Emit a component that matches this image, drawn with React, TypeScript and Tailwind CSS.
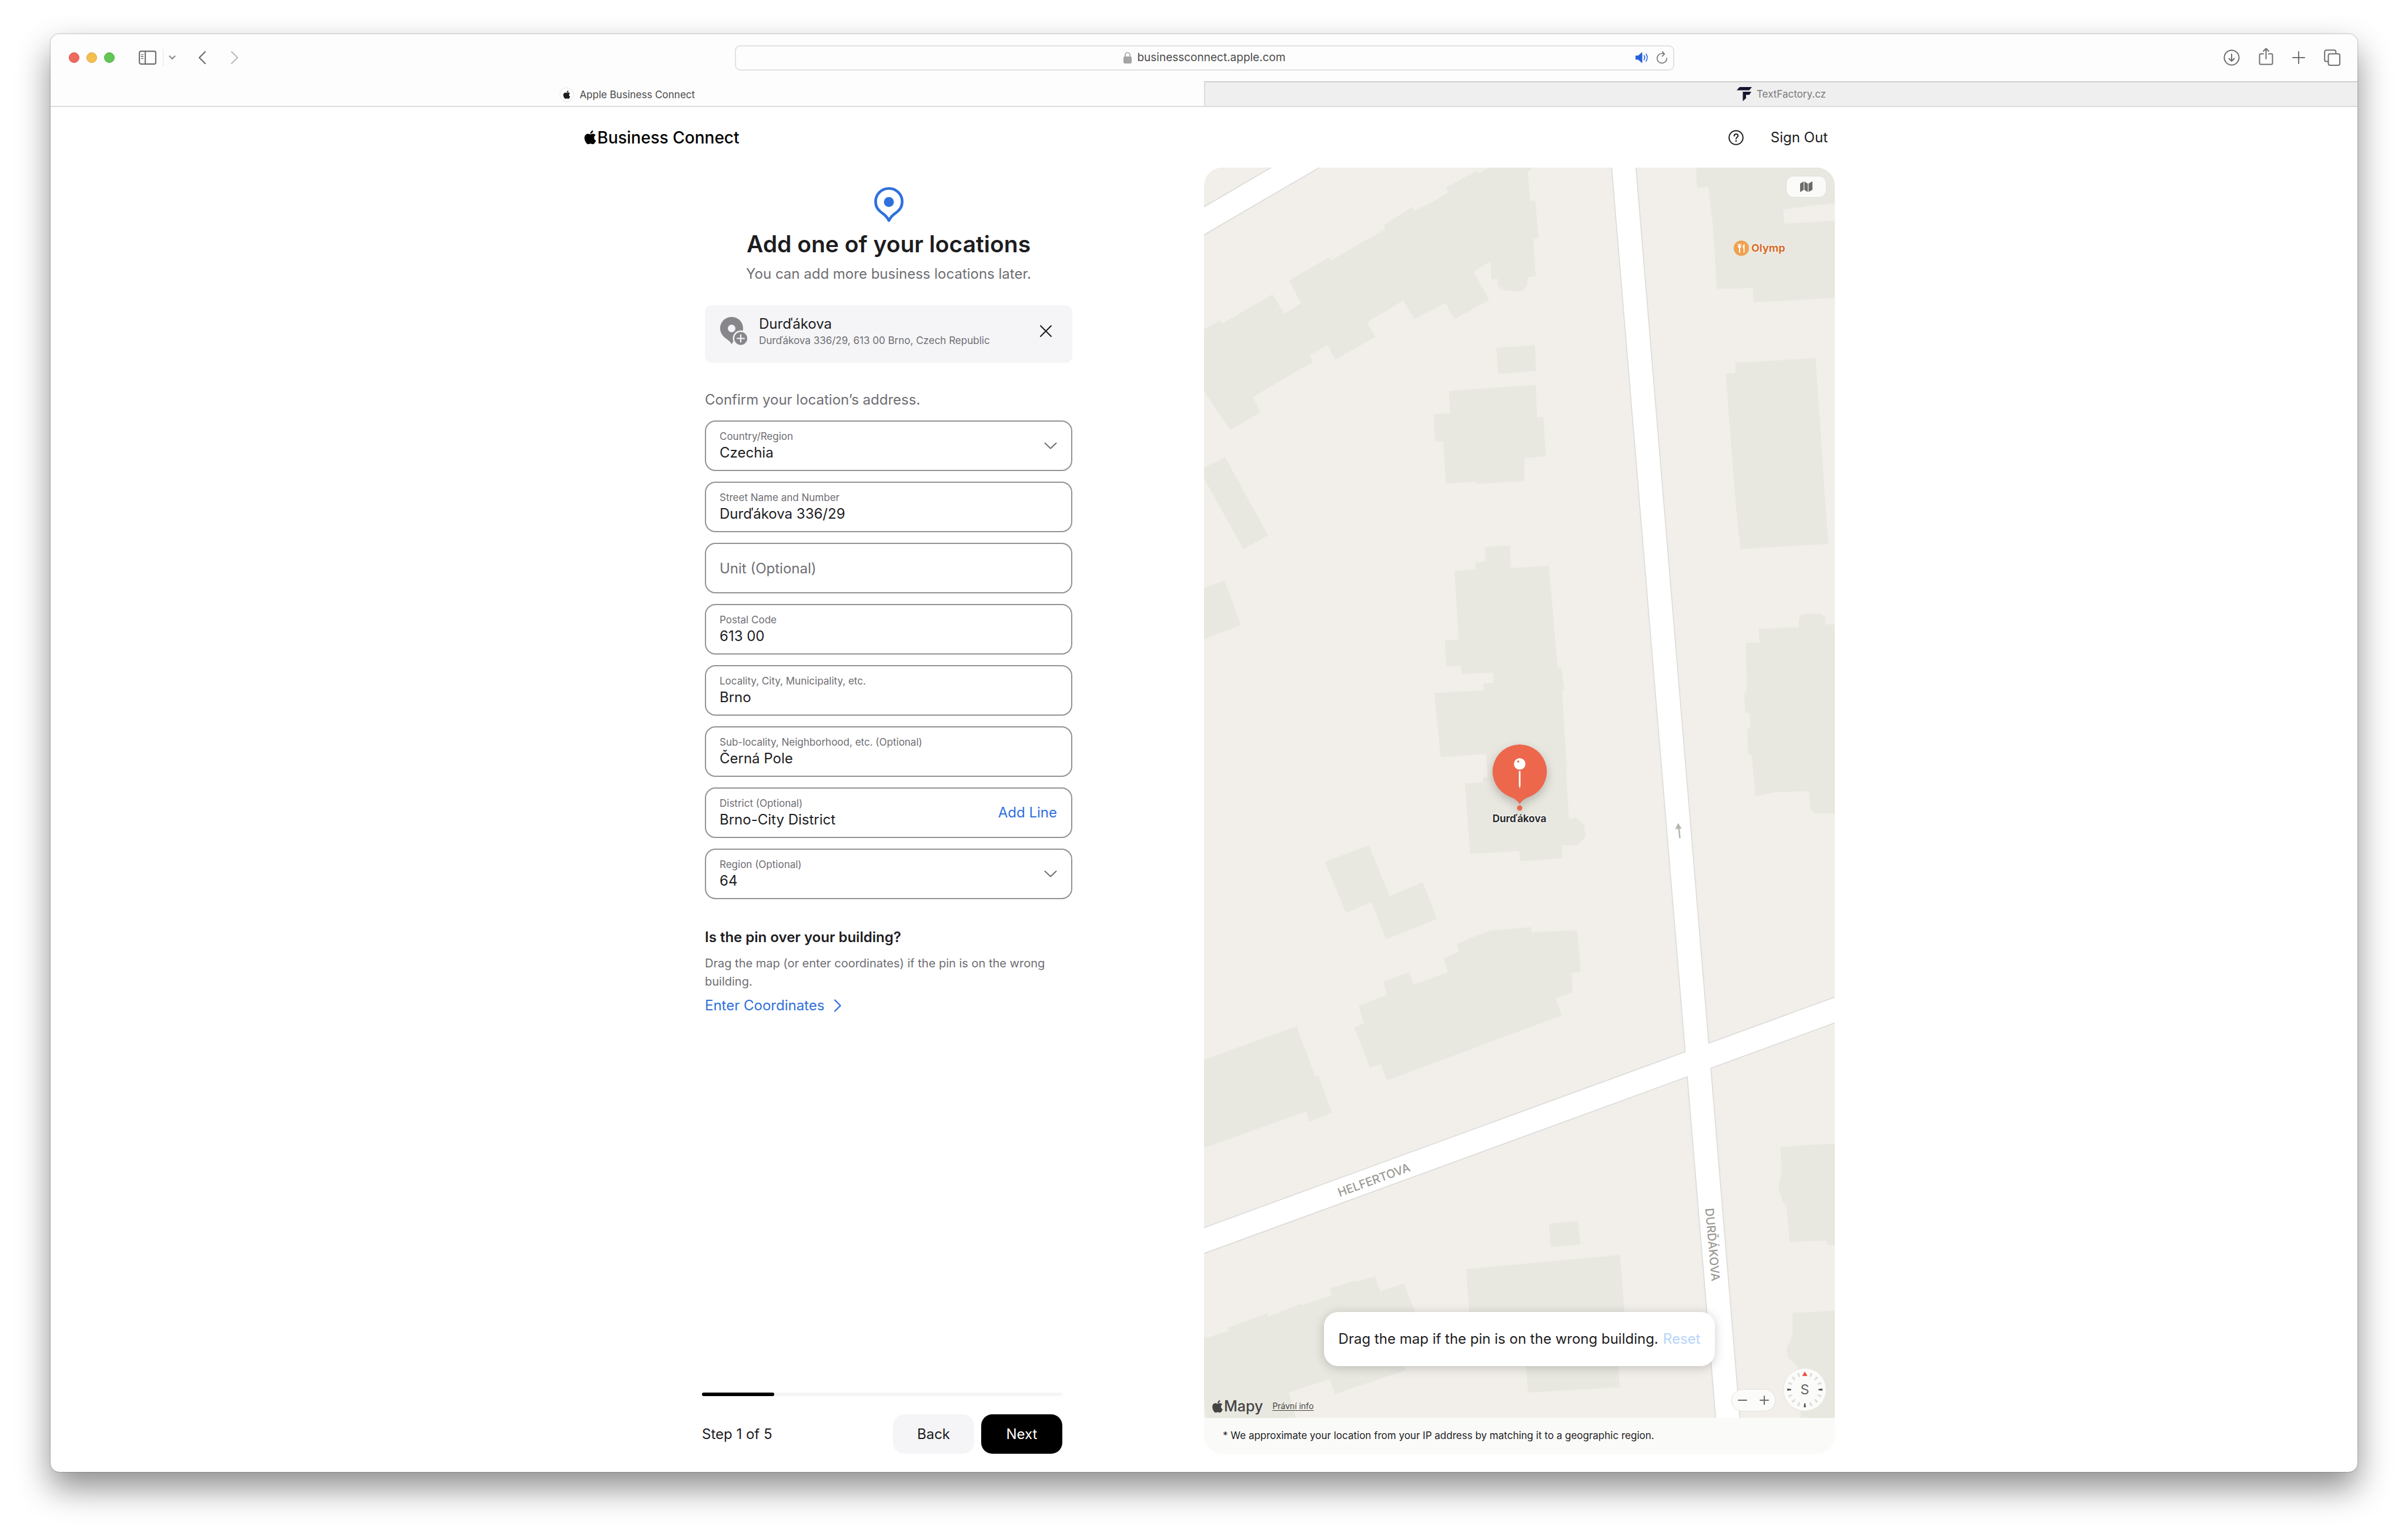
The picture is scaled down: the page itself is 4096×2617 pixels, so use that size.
import { useState, type ReactNode } from 'react';
import { FaApple } from 'react-icons/fa';

const TICKS = [22.5, 45, 67.5, 112.5, 135, 157.5, 202.5, 225, 247.5, 292.5, 315, 337.5];

function ChevronDown() {
  return (
    <svg viewBox="0 0 22 12" className="pointer-events-none h-3 w-[22px] shrink-0" fill="none" stroke="#6e6e73" strokeWidth="2" strokeLinecap="round" strokeLinejoin="round">
      <path d="M1.5 1.5 11 10.5 20.5 1.5" />
    </svg>
  );
}

function Toolbar() {
  return (
    <header className="flex h-20 items-center bg-[#fdfdfd] text-[#6f6f6f]">
      <div className="flex flex-1 items-center pl-[31px]">
        <div className="flex gap-3">
          <button aria-label="Close window" className="size-[18px] rounded-full border border-[#d9594f] bg-[#ed6a5f]" />
          <button aria-label="Minimize window" className="size-[18px] rounded-full border border-[#dfa63e] bg-[#f5bf4f]" />
          <button aria-label="Zoom window" className="size-[18px] rounded-full border border-[#51b143] bg-[#62c554]" />
        </div>
        <button aria-label="Sidebar" className="ml-[41px]">
          <svg viewBox="0 0 39 31" className="h-6 w-[30px]" fill="none" stroke="currentColor" strokeWidth="2.8">
            <rect x="1.4" y="1.4" width="36.2" height="28.2" rx="3.5" />
            <path d="M14.4 1.4v28.2" />
            <path d="M5.5 8.8h4.4M5.5 13.2h4.4M5.5 17.6h4.4" strokeWidth="1.8" strokeLinecap="round" />
          </svg>
        </button>
        <span className="ml-[11px] h-7 w-px bg-[#e4e4e4]" />
        <button aria-label="Tab groups" className="ml-[9px]">
          <svg viewBox="0 0 12 8" className="h-2 w-3" fill="none" stroke="#8b8b8f" strokeWidth="2.2" strokeLinecap="round" strokeLinejoin="round">
            <path d="M1.5 1.5 6 6l4.500-4.500" />
          </svg>
        </button>
        <button aria-label="Back" className="ml-[38px]">
          <svg viewBox="0 0 14 24" className="h-6 w-3.5" fill="none" stroke="currentColor" strokeWidth="2.3" strokeLinecap="round" strokeLinejoin="round">
            <path d="M12 2 2 12l10 10" />
          </svg>
        </button>
        <button aria-label="Forward" className="ml-[41px] text-[#bdbdbd]">
          <svg viewBox="0 0 14 24" className="h-6 w-3.5" fill="none" stroke="currentColor" strokeWidth="2.3" strokeLinecap="round" strokeLinejoin="round">
            <path d="m2 2 10 10L2 22" />
          </svg>
        </button>
      </div>
      <div className="relative flex h-[43px] w-[40.7%] items-center justify-center gap-[9px] rounded-[9px] border-2 border-[#e2e2e2]">
        <svg viewBox="0 0 14 20" className="h-5 w-3.5" fill="#a5a5a5">
          <rect x="0" y="8" width="14" height="12" rx="2.200" />
          <path d="M3 9V5.500a4 4 0 0 1 8 0V9" fill="none" stroke="#a5a5a5" strokeWidth="1.700" />
        </svg>
        <input aria-label="Address" defaultValue="businessconnect.apple.com" className="field-sizing-content bg-transparent text-[19px] leading-[26px] text-[#4b4b4b] outline-none" />
        <div className="absolute right-[9px] flex items-center gap-3">
          <button aria-label="Mute tab">
            <svg viewBox="0 0 24 20" className="h-5 w-6" fill="#2762dd">
              <path d="M1 6.500h4.500L11.500 1.200c.5-.4 1-.2 1 .4v16.800c0 .6-.5.8-1 .4L5.500 13.500H2c-.6 0-1-.4-1-1z" />
              <path d="M15.500 6.500c1.400 2 1.400 5 0 7M19 4c2.500 3.500 2.500 8.500 0 12" fill="none" stroke="#2762dd" strokeWidth="1.700" strokeLinecap="round" />
            </svg>
          </button>
          <button aria-label="Reload">
            <svg viewBox="0 0 20 22" className="h-[22px] w-5" fill="none" stroke="#777" strokeWidth="1.700" strokeLinecap="round" strokeLinejoin="round">
              <path d="M18.200 12.200a8.200 8.200 0 1 1-8.200-8.200c1.400 0 2.800.3 4 1M10.800.9 14.300 5 10.500 8.600" />
            </svg>
          </button>
        </div>
      </div>
      <div className="flex flex-1 items-center justify-end gap-8 pr-[29px]">
        <button aria-label="Downloads">
          <svg viewBox="0 0 28 28" className="size-7" fill="none" stroke="currentColor" strokeWidth="2" strokeLinecap="round" strokeLinejoin="round">
            <circle cx="14" cy="14" r="12.500" />
            <path d="M14 8v12M9.500 15.500 14 20l4.500-4.500" />
          </svg>
        </button>
        <button aria-label="Share" className="pb-1">
          <svg viewBox="0 0 25 30" className="h-[30px] w-[25px]" fill="none" stroke="currentColor" strokeWidth="2" strokeLinecap="round" strokeLinejoin="round">
            <path d="M8 10.500H3.500a2 2 0 0 0-2 2V26.500a2 2 0 0 0 2 2h18a2 2 0 0 0 2-2V12.500a2 2 0 0 0-2-2H17M12.500 19V1.500M8 6l4.500-4.500L17 6" />
          </svg>
        </button>
        <button aria-label="New tab">
          <svg viewBox="0 0 22 22" className="size-[22px]" fill="none" stroke="currentColor" strokeWidth="2" strokeLinecap="round">
            <path d="M11 1v20M1 11h20" />
          </svg>
        </button>
        <button aria-label="Tab overview">
          <svg viewBox="0 0 28 28" className="size-7" fill="none" stroke="currentColor" strokeWidth="2" strokeLinejoin="round">
            <rect x="7.500" y="7.500" width="19.500" height="19.500" rx="3" />
            <path d="M7.500 20.500H4a2.800 2.800 0 0 1-2.800-2.800V4A2.800 2.800 0 0 1 4 1.200h13.500A2.800 2.800 0 0 1 20.300 4v3.500" />
          </svg>
        </button>
      </div>
    </header>
  );
}

function TabBar() {
  return (
    <nav className="grid h-11 grid-cols-2 border-b-2 border-[#dcdcdc] text-[17px] leading-5">
      <a href="#connect" className="flex items-center justify-center gap-2.5 bg-[#fdfdfd] pt-1 text-[#4a4a4a]">
        <span className="flex size-6 items-center justify-center rounded-full border border-[#e4e4e4] bg-white text-[#1d1d1f]">
          <FaApple className="size-4" />
        </span>
        Apple Business Connect
      </a>
      <a href="#textfactory" className="flex items-center justify-center gap-2 border-t-2 border-l-2 border-t-[#cfcfcf] border-l-[#dcdcdc] bg-[#efefef] text-[#7a7a7a]">
        <svg viewBox="0 0 26 24" className="h-6 w-[26px]" fill="#171430">
          <path d="M5 0h21l-4.500 5.500H0zM10.500 8H25l-3.500 5.200h-5.500V19l-5.500 5z" />
        </svg>
        TextFactory.cz
      </a>
    </nav>
  );
}

type FieldProps = { id: string; label: string; value: string; select?: boolean; action?: ReactNode };

function Field({ id, label, value, select, action }: FieldProps) {
  const [text, setText] = useState(value);
  return (
    <div className="flex h-[86px] items-center justify-between rounded-[18px] border-2 border-[#929296] bg-white pr-6 pl-[23px]">
      <div className="flex flex-1 flex-col">
        <label htmlFor={id} className="text-[17px] leading-6 text-[#6e6e73]">
          {label}
        </label>
        {select ? (
          <select id={id} defaultValue={value} className="h-8 w-full appearance-none bg-transparent text-[24px] leading-8 outline-none">
            <option>{value}</option>
          </select>
        ) : (
          <input id={id} value={text} onChange={(e) => setText(e.target.value)} className="h-8 w-full bg-transparent text-[24px] leading-8 outline-none" />
        )}
      </div>
      {select ? <ChevronDown /> : action}
    </div>
  );
}

function LocationForm() {
  return (
    <section className="flex flex-col">
      <div className="mx-auto flex w-[625px] flex-col pt-[33px]">
        <svg viewBox="0 0 50 60" className="mx-auto h-[60px] w-[50px]" fill="none">
          <path d="M25 2.500C12.500 2.500 2.400 12.300 2.400 25c0 7.500 3.200 13 8.600 17.200 5.500 4.300 10.200 6.600 14 14.800 3.800-8.200 8.500-10.500 14-14.800 5.400-4.200 8.600-9.700 8.600-17.200C47.600 12.300 37.500 2.500 25 2.500z" stroke="#2f70dc" strokeWidth="4.600" strokeLinejoin="round" />
          <circle cx="25" cy="25.500" r="8.500" fill="#2f70dc" />
        </svg>
        <h1 className="mt-3 text-center text-[39px] leading-[50px] font-semibold">Add one of your locations</h1>
        <p className="mt-[9px] text-center text-[24px] leading-[34px] text-[#6e6e73]">You can add more business locations later.</p>

        <div className="mt-9 flex items-center rounded-xl bg-[#f5f5f7] pt-4 pr-[33px] pb-[26px] pl-[26px]">
          <svg viewBox="0 0 46 48" className="h-12 w-[46px]" fill="#86868b">
            <path d="M19.500 0C8.700 0 0 8.500 0 19.300c0 8 4.500 13.500 10 17.500 4.500 3.300 7.700 5.200 9.500 9.600 1.800-4.400 5-6.300 9.500-9.600 5.500-4 10-9.500 10-17.500C39 8.500 30.300 0 19.500 0z" />
            <circle cx="19.500" cy="19.500" r="6.500" fill="#f5f5f7" />
            <circle cx="35" cy="36.500" r="13.500" fill="#f5f5f7" />
            <circle cx="35" cy="36.500" r="11" />
            <path d="M35 30.500v12M29 36.500h12" stroke="#f5f5f7" strokeWidth="2.200" strokeLinecap="round" />
          </svg>
          <div className="ml-5 flex flex-1 flex-col">
            <span className="text-[24px] leading-8">Durďákova</span>
            <span className="text-[17px] leading-6 text-[#6e6e73]">Durďákova 336/29, 613 00 Brno, Czech Republic</span>
          </div>
          <button aria-label="Clear location">
            <svg viewBox="0 0 24 24" className="size-6" fill="none" stroke="#1d1d1f" strokeWidth="2" strokeLinecap="round">
              <path d="m3 3 18 18M21 3 3 21" />
            </svg>
          </button>
        </div>

        <p className="mt-[46px] text-[24px] leading-[34px] text-[#6e6e73]">Confirm your location’s address.</p>
        <form className="mt-[18px] flex flex-col gap-[18px]">
          <Field id="country" label="Country/Region" value="Czechia" select />
          <Field id="street" label="Street Name and Number" value="Durďákova 336/29" />
          <input aria-label="Unit (Optional)" placeholder="Unit (Optional)" className="h-[86px] rounded-[18px] border-2 border-[#929296] px-[23px] text-[24px] outline-none placeholder:text-[#6e6e73]" />
          <Field id="postal" label="Postal Code" value="613 00" />
          <Field id="locality" label="Locality, City, Municipality, etc." value="Brno" />
          <Field id="sublocality" label="Sub-locality, Neighborhood, etc. (Optional)" value="Černá Pole" />
          <Field
            id="district"
            label="District (Optional)"
            value="Brno-City District"
            action={
              <button type="button" className="text-[24px] leading-8 text-[#2f70dc]">
                Add Line
              </button>
            }
          />
          <Field id="region" label="Region (Optional)" value="64" select />
        </form>

        <h2 className="mt-12 text-[24px] leading-[34px] font-semibold">Is the pin over your building?</h2>
        <p className="mt-3 text-[20px] leading-[31px] text-[#6e6e73]">Drag the map (or enter coordinates) if the pin is on the wrong building.</p>
        <a href="#coordinates" className="mt-2 flex items-center gap-4 text-[24px] leading-[34px] text-[#2f70dc]">
          Enter Coordinates
          <svg viewBox="0 0 13 22" className="h-[22px] w-[13px]" fill="none" stroke="currentColor" strokeWidth="2.300" strokeLinecap="round" strokeLinejoin="round">
            <path d="m2 1.500 9.500 9.500L2 20.500" />
          </svg>
        </a>
      </div>

      <footer className="mt-auto ml-[219px] w-[613px]">
        <div role="progressbar" aria-label="Setup progress" aria-valuenow={1} aria-valuemax={5} className="h-1.5 rounded-full bg-[#f5f5f7]">
          <div className="h-full w-1/5 rounded-full bg-black" />
        </div>
        <div className="mt-[31px] flex items-center gap-3 text-[24px]">
          <span className="flex-1">Step 1 of 5</span>
          <button className="h-[67px] w-[138px] rounded-[19px] bg-[#f5f5f7]">Back</button>
          <button className="h-[67px] w-[138px] rounded-[19px] bg-black text-white">Next</button>
        </div>
      </footer>
    </section>
  );
}

function MapCanvas() {
  return (
    <svg viewBox="0 0 1073 2127" preserveAspectRatio="xMidYMid slice" className="absolute inset-0 size-full" role="img" aria-label="Map of Durďákova and Helfertova">
      <rect width="1073" height="2127" fill="#f2efea" />
      <g fill="#e8e8e0">
        <g transform="translate(-9 -9) scale(.6941 .611)">
          <path d="M13 465 52 441 57 450 181 368 210 422 251 393 221 330 318 266 323 275 400 223 458 188 453 176 525 124 529 135 568 114 611 84 606 72 680 24 686 32 713 14 817 14 815 20 806 27 813 108 825 107 833 212 820 214 826 317 806 321 805 343 792 360 753 359 733 346 732 325 717 328 715 276 674 306 712 384 627 438 604 393 528 438 501 386 413 446 433 487 335 550 316 510 273 537 280 556 133 654 152 697 77 746 13 638z" />
          <path d="M729 517 824 510 827 581 734 590z" />
          <path d="M613 637 826 620 830 710 845 710 851 819 799 824 799 888 682 896 681 889 606 896 599 779 579 778 575 702 616 699z" />
          <path d="M13 850 65 821 170 1039 109 1078 13 880z" />
          <path d="M13 1186 63 1164 104 1289 13 1328z" />
          <path d="M701 1071 763 1067 765 1130 858 1123 880 1407 889 1408 896 1469 890 1470 903 1693 900 1694 908 1828 925 1825 945 1845 948 1878 930 1901 890 1901 892 1938 788 1946 785 1918 665 1925 652 1729 696 1726 696 1714 708 1712 704 1648 593 1656 577 1478 699 1470 697 1451 723 1449 722 1421 646 1425 641 1401 606 1405 603 1331 637 1328 627 1138 679 1134 677 1115 703 1111z" />
          <path d="M1218 0 1221 72 1249 69 1260 180 1270 353 1358 351 1359 391 1559 378V163L1435 172 1432 132 1505 121 1559 115V0z" />
          <path d="M1315 557 1357 557 1512 545 1530 850 1543 1063 1327 1077 1318 980 1291 588 1315 588z" />
          <path d="M1373 1299 1471 1295 1471 1270 1478 1259 1525 1256 1536 1266 1537 1287 1559 1286V1813L1512 1813 1498 1801 1496 1751 1412 1754 1364 1765 1355 1650 1346 1647 1344 1577 1353 1575 1349 1533 1339 1533 1337 1478 1343 1478 1341 1338 1374 1338z" />
        </g>
        <g transform="translate(-9 942) scale(.6941 .611)">
          <path d="M309 391 417 345 468 487 549 447 584 550 460 607 423 504 361 533z" />
          <path d="M633 619 675 599 715 582 815 573 816 588 928 581 936 698 914 700 917 754 876 772 889 819 461 1000 446 954 420 965 381 852 405 841 392 792 460 762 453 724 515 698 527 733 611 698 600 659 638 640z" />
          <path d="M13 942 240 848 285 988 293 985 327 1090 271 1114 263 1086 13 1188z" />
        </g>
        <g transform="translate(-9 1632) scale(.6941 .391)">
          <path d="M1425 88 1460 82 1525 75 1559 72V515L1540 512 1539 494 1448 499 1440 348 1430 320 1421 266 1429 187z" />
          <path d="M858 420 929 408 936 510 862 522z" />
          <path d="M655 618 1033 556 1050 960 1026 965 1032 1132 807 1155 799 960 670 970z" />
          <path d="M13 910 22 915 73 886 72 873 168 808 170 825 252 767 253 775 326 731 320 703 385 666 386 672 432 648 445 714 503 679 530 804 560 940 485 960 507 1058 334 1161 321 1096 221 1155 240 1280H20L13 1200z" />
          <path d="M1455 806 1505 805 1559 797V1280H1475L1475 1230 1468 1040 1443 1000 1441 960 1455 905z" />
        </g>
      </g>
      <g fill="none" stroke="#dcdddb" strokeWidth="43">
        <path d="M713 -12 892 2139" />
        <path d="M-30 1836 1103 1422" />
        <path d="M-30 108.500 186-17.500" />
      </g>
      <g fill="none" stroke="#fff" strokeWidth="39.500">
        <path d="M713 -12 892 2139" />
        <path d="M-30 1836 1103 1422" />
        <path d="M-30 108.500 186-17.500" />
      </g>
      <g fill="#9a9a95" fontSize="20" fontWeight="500" textAnchor="middle">
        <text x="0" y="7" transform="translate(289 1722) rotate(-20)">HELFERTOVA</text>
        <text x="0" y="7" transform="translate(865 1832) rotate(85)">DURĎÁKOVA</text>
      </g>
      <path d="M809.500 1141 807.500 1121" stroke="#b5b5b3" strokeWidth="2.500" />
      <path d="m806.500 1115 6 9.500-11 1z" fill="#b5b5b3" />
    </svg>
  );
}

function Compass() {
  return (
    <button aria-label="Compass, facing north" className="size-[74px] rounded-full border border-[#e3e2de] bg-[#fbfbf9]">
      <svg viewBox="-48 -48 96 96" className="size-full">
        {TICKS.map((a) => (
          <path key={a} d="M-2.600-40h5.200l-1.300 9h-2.600z" transform={`rotate(${a})`} fill="#dbdbd9" />
        ))}
        {[90, 180, 270].map((a) => (
          <path key={a} d="M-2.300-40h4.600l-1.100 9h-2.400z" transform={`rotate(${a})`} fill="#4a4a4a" />
        ))}
        <path d="M0-41 6-31H-6z" fill="#eb4d3d" />
        <text x="0" y="10.500" textAnchor="middle" fontSize="31" fill="#666">
          S
        </text>
      </svg>
    </button>
  );
}

function MapPanel() {
  return (
    <section className="flex flex-col overflow-hidden rounded-[31px]">
      <div className="relative flex-1 overflow-hidden">
        <MapCanvas />
        <button aria-label="Map type" className="absolute top-3.5 right-3.5 flex h-[37px] w-[69px] items-center justify-center rounded-[13px] border border-[#e0e0dc] bg-[#fafaf8]">
          <svg viewBox="0 0 21 19" className="h-[19px] w-[21px]" fill="#6b6b6b">
            <path d="M0 4.200 6 .6v14.200L.9 18.200C.4 18.500 0 18.300 0 17.700zM7.200.6 13 4.200v14.200L7.200 15zM14.200 4.200 20 .8c.5-.3 1-.1 1 .5v13.500l-6.800 3.600z" />
          </svg>
        </button>
        <div className="absolute top-[124px] left-[901px] flex items-center gap-1 text-[18px] leading-[26px] font-bold text-[#d96b27]">
          <svg viewBox="0 0 26 26" className="size-[26px]">
            <circle cx="13" cy="13" r="13" fill="#f0a04f" />
            <path d="M7 5.500v4.200c0 1.500.8 2.400 2 2.700V20a1 1 0 0 0 2 0v-7.600c1.200-.3 2-1.200 2-2.700V5.500h-1v4h-1v-4H9v4H8v-4zM18.500 5.500c-2 .6-3 3-3 5.800 0 1.500.4 2.400 1.200 2.700v6a.9.9 0 0 0 1.800 0z" fill="#fff" />
          </svg>
          <span className="[text-shadow:0_0_3px_#fff,0_0_3px_#fff]">Olymp</span>
        </div>

        <div className="absolute top-[981px] left-1/2 flex w-32 -translate-x-1/2 flex-col items-center">
          <svg viewBox="0 0 92 112" className="h-28 w-[92px] overflow-visible drop-shadow-[0_6px_8px_rgba(0,0,0,0.22)]">
            <path d="M46 0a46 46 0 0 1 16.500 89c-7.500 2.800-12 5.500-16.500 12.500-4.500-7-9-9.700-16.500-12.500A46 46 0 0 1 46 0z" fill="#ec674c" />
            <circle cx="46" cy="108" r="4.500" fill="#ec674c" />
            <circle cx="46" cy="33" r="9.800" fill="#fff" />
            <circle cx="43.500" cy="29" r="1.800" fill="#ec674c" />
            <path d="M44.600 45h2.800v25L46 75l-1.400-5z" fill="#fff" />
          </svg>
          <span className="mt-0.5 text-[17px] leading-6 font-bold text-[#2c2c2c] [text-shadow:0_0_3px_#fff,0_0_3px_#fff,0_0_2px_#fff]">Durďákova</span>
        </div>

        <div className="absolute bottom-[88px] left-1/2 flex h-[92px] -translate-x-1/2 items-center gap-2 rounded-[24px] bg-white px-[25px] text-[24px] whitespace-nowrap shadow-[0_3px_18px_rgba(0,0,0,0.2)]">
          <span>Drag the map if the pin is on the wrong building.</span>
          <button disabled className="text-[#b5d4fa]">
            Reset
          </button>
        </div>

        <div className="absolute bottom-1 left-3.5 flex items-center gap-4 text-[#444]">
          <span className="flex items-center gap-0.5 text-[25px] leading-8 font-medium">
            <FaApple className="h-[25px] w-[18px]" />
            Mapy
          </span>
          <a href="#legal" className="text-[14px] leading-5 underline underline-offset-2">
            Právní info
          </a>
        </div>

        <div className="absolute right-3.5 bottom-[11px] flex items-end gap-[13px]">
          <div className="flex h-[38px] w-[75px] rounded-full border border-[#e3e2de] bg-[#fbfbf9]">
            <button aria-label="Zoom out" className="flex flex-1 items-center justify-center">
              <svg viewBox="0 0 16 16" className="size-4" stroke="#6b6b6b" strokeWidth="2" strokeLinecap="round">
                <path d="M1 8h14" />
              </svg>
            </button>
            <button aria-label="Zoom in" className="flex flex-1 items-center justify-center">
              <svg viewBox="0 0 16 16" className="size-4" stroke="#6b6b6b" strokeWidth="2" strokeLinecap="round">
                <path d="M1 8h14M8 1v14" />
              </svg>
            </button>
          </div>
          <Compass />
        </div>
      </div>
      <p className="bg-[#fafaf9] px-8 py-[18px] text-[17px] leading-[25px]">* We approximate your location from your IP address by matching it to a geographic region.</p>
    </section>
  );
}

export default function App() {
  return (
    <div className="flex min-h-screen flex-col overflow-hidden bg-white px-[86px] pt-[58px] pb-[114px] font-['Inter',sans-serif] text-[#1d1d1f]">
      <div className="flex flex-1 flex-col rounded-[15px] bg-white shadow-[0_0_2px_rgba(0,0,0,0.55),0_27px_56px_rgba(0,0,0,0.45)]">
        <div className="flex flex-1 flex-col overflow-hidden rounded-[15px]">
          <Toolbar />
          <TabBar />
          <div className="mx-auto flex w-full max-w-[2146px] flex-1 flex-col pb-[31px]">
            <header className="flex h-[103px] items-center justify-between pr-3 pl-[19px]">
              <a href="#home" className="flex items-center gap-0.5 text-[28px] leading-9 font-medium text-black">
                <FaApple className="h-[27px] w-5" />
                Business Connect
              </a>
              <div className="flex items-center gap-[46px] text-[24px]">
                <button aria-label="Help">
                  <svg viewBox="0 0 26 26" className="size-[26px]" fill="none" stroke="#1d1d1f" strokeWidth="2" strokeLinecap="round">
                    <circle cx="13" cy="13" r="11.800" />
                    <path d="M9.800 10.200c0-2 1.400-3.300 3.300-3.300s3.300 1.200 3.300 3c0 2.600-3.300 2.500-3.300 5" />
                    <circle cx="13.100" cy="18.600" r=".5" />
                  </svg>
                </button>
                <a href="#signout">Sign Out</a>
              </div>
            </header>
            <main className="grid flex-1 grid-cols-2">
              <LocationForm />
              <MapPanel />
            </main>
          </div>
        </div>
      </div>
    </div>
  );
}
